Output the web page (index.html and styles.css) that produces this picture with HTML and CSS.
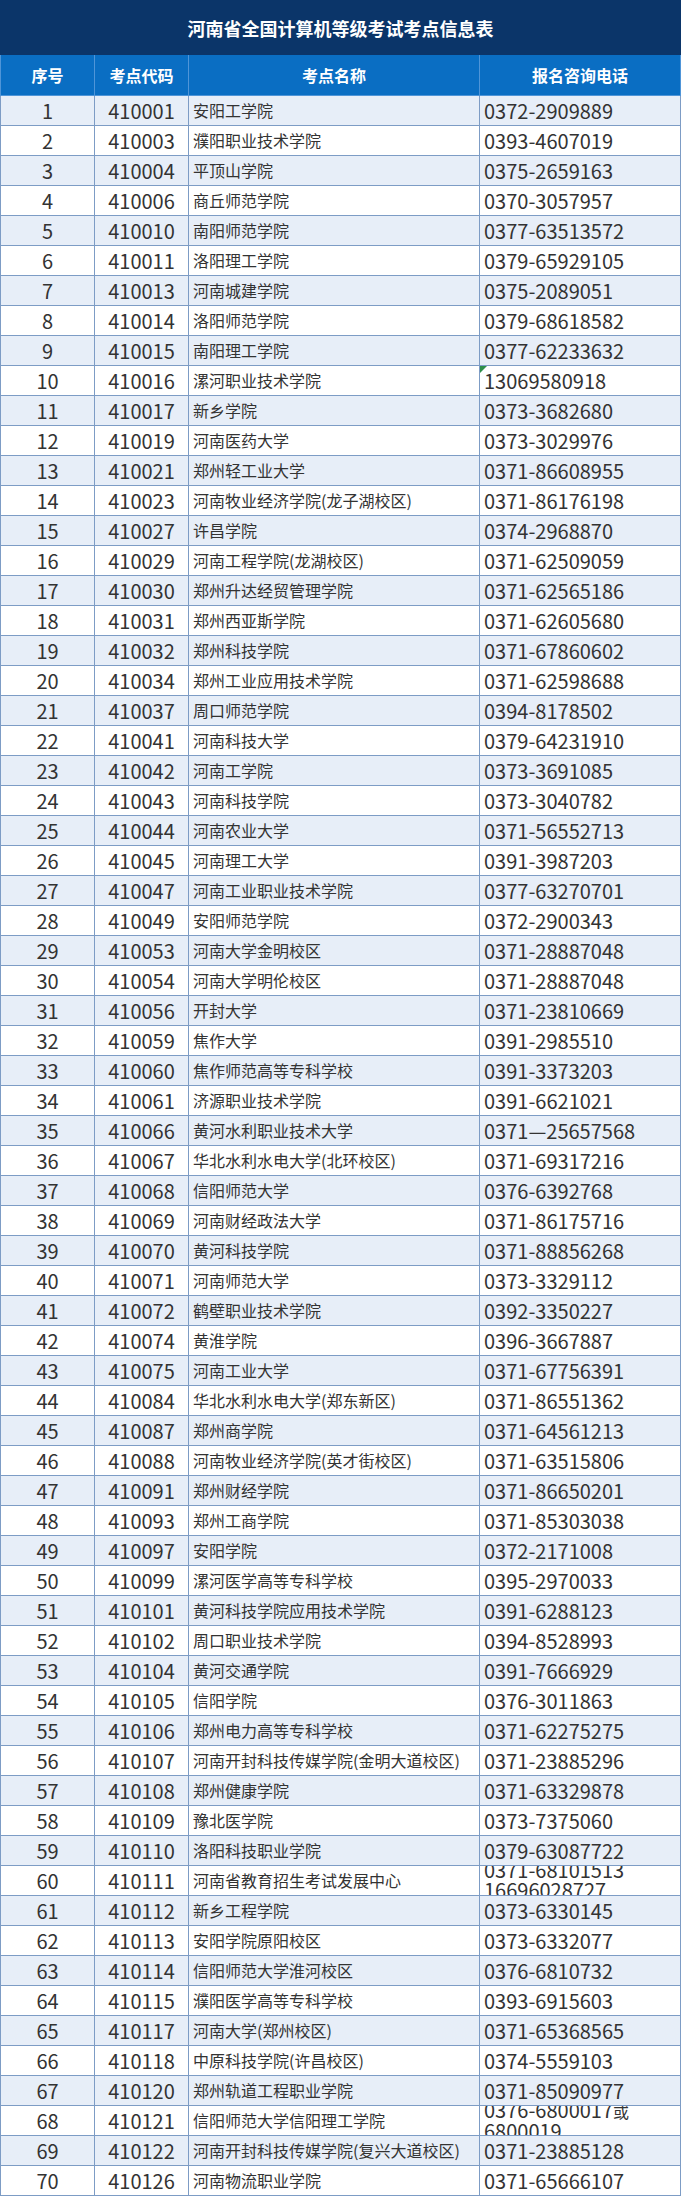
FILE: index.html
```html
<!DOCTYPE html>
<html lang="zh-CN">
<head>
<meta charset="utf-8">
<title>河南省全国计算机等级考试考点信息表</title>
<link rel="stylesheet" href="styles.css">
</head>
<body>
<div class="sheet">
  <div class="title">河南省全国计算机等级考试考点信息表</div>
  <table class="grid">
    <colgroup>
      <col class="c-no"><col class="c-code"><col class="c-name"><col class="c-tel">
    </colgroup>
    <thead>
      <tr><th>序号</th><th>考点代码</th><th>考点名称</th><th>报名咨询电话</th></tr>
    </thead>
    <tbody>
      <tr><td class="n">1</td><td class="n">410001</td><td class="nm">安阳工学院</td><td class="t">0372-2909889</td></tr>
      <tr><td class="n">2</td><td class="n">410003</td><td class="nm">濮阳职业技术学院</td><td class="t">0393-4607019</td></tr>
      <tr><td class="n">3</td><td class="n">410004</td><td class="nm">平顶山学院</td><td class="t">0375-2659163</td></tr>
      <tr><td class="n">4</td><td class="n">410006</td><td class="nm">商丘师范学院</td><td class="t">0370-3057957</td></tr>
      <tr><td class="n">5</td><td class="n">410010</td><td class="nm">南阳师范学院</td><td class="t">0377-63513572</td></tr>
      <tr><td class="n">6</td><td class="n">410011</td><td class="nm">洛阳理工学院</td><td class="t">0379-65929105</td></tr>
      <tr><td class="n">7</td><td class="n">410013</td><td class="nm">河南城建学院</td><td class="t">0375-2089051</td></tr>
      <tr><td class="n">8</td><td class="n">410014</td><td class="nm">洛阳师范学院</td><td class="t">0379-68618582</td></tr>
      <tr><td class="n">9</td><td class="n">410015</td><td class="nm">南阳理工学院</td><td class="t">0377-62233632</td></tr>
      <tr><td class="n">10</td><td class="n">410016</td><td class="nm">漯河职业技术学院</td><td class="t note">13069580918</td></tr>
      <tr><td class="n">11</td><td class="n">410017</td><td class="nm">新乡学院</td><td class="t">0373-3682680</td></tr>
      <tr><td class="n">12</td><td class="n">410019</td><td class="nm">河南医药大学</td><td class="t">0373-3029976</td></tr>
      <tr><td class="n">13</td><td class="n">410021</td><td class="nm">郑州轻工业大学</td><td class="t">0371-86608955</td></tr>
      <tr><td class="n">14</td><td class="n">410023</td><td class="nm">河南牧业经济学院(龙子湖校区)</td><td class="t">0371-86176198</td></tr>
      <tr><td class="n">15</td><td class="n">410027</td><td class="nm">许昌学院</td><td class="t">0374-2968870</td></tr>
      <tr><td class="n">16</td><td class="n">410029</td><td class="nm">河南工程学院(龙湖校区)</td><td class="t">0371-62509059</td></tr>
      <tr><td class="n">17</td><td class="n">410030</td><td class="nm">郑州升达经贸管理学院</td><td class="t">0371-62565186</td></tr>
      <tr><td class="n">18</td><td class="n">410031</td><td class="nm">郑州西亚斯学院</td><td class="t">0371-62605680</td></tr>
      <tr><td class="n">19</td><td class="n">410032</td><td class="nm">郑州科技学院</td><td class="t">0371-67860602</td></tr>
      <tr><td class="n">20</td><td class="n">410034</td><td class="nm">郑州工业应用技术学院</td><td class="t">0371-62598688</td></tr>
      <tr><td class="n">21</td><td class="n">410037</td><td class="nm">周口师范学院</td><td class="t">0394-8178502</td></tr>
      <tr><td class="n">22</td><td class="n">410041</td><td class="nm">河南科技大学</td><td class="t">0379-64231910</td></tr>
      <tr><td class="n">23</td><td class="n">410042</td><td class="nm">河南工学院</td><td class="t">0373-3691085</td></tr>
      <tr><td class="n">24</td><td class="n">410043</td><td class="nm">河南科技学院</td><td class="t">0373-3040782</td></tr>
      <tr><td class="n">25</td><td class="n">410044</td><td class="nm">河南农业大学</td><td class="t">0371-56552713</td></tr>
      <tr><td class="n">26</td><td class="n">410045</td><td class="nm">河南理工大学</td><td class="t">0391-3987203</td></tr>
      <tr><td class="n">27</td><td class="n">410047</td><td class="nm">河南工业职业技术学院</td><td class="t">0377-63270701</td></tr>
      <tr><td class="n">28</td><td class="n">410049</td><td class="nm">安阳师范学院</td><td class="t">0372-2900343</td></tr>
      <tr><td class="n">29</td><td class="n">410053</td><td class="nm">河南大学金明校区</td><td class="t">0371-28887048</td></tr>
      <tr><td class="n">30</td><td class="n">410054</td><td class="nm">河南大学明伦校区</td><td class="t">0371-28887048</td></tr>
      <tr><td class="n">31</td><td class="n">410056</td><td class="nm">开封大学</td><td class="t">0371-23810669</td></tr>
      <tr><td class="n">32</td><td class="n">410059</td><td class="nm">焦作大学</td><td class="t">0391-2985510</td></tr>
      <tr><td class="n">33</td><td class="n">410060</td><td class="nm">焦作师范高等专科学校</td><td class="t">0391-3373203</td></tr>
      <tr><td class="n">34</td><td class="n">410061</td><td class="nm">济源职业技术学院</td><td class="t">0391-6621021</td></tr>
      <tr><td class="n">35</td><td class="n">410066</td><td class="nm">黄河水利职业技术大学</td><td class="t">0371—25657568</td></tr>
      <tr><td class="n">36</td><td class="n">410067</td><td class="nm">华北水利水电大学(北环校区)</td><td class="t">0371-69317216</td></tr>
      <tr><td class="n">37</td><td class="n">410068</td><td class="nm">信阳师范大学</td><td class="t">0376-6392768</td></tr>
      <tr><td class="n">38</td><td class="n">410069</td><td class="nm">河南财经政法大学</td><td class="t">0371-86175716</td></tr>
      <tr><td class="n">39</td><td class="n">410070</td><td class="nm">黄河科技学院</td><td class="t">0371-88856268</td></tr>
      <tr><td class="n">40</td><td class="n">410071</td><td class="nm">河南师范大学</td><td class="t">0373-3329112</td></tr>
      <tr><td class="n">41</td><td class="n">410072</td><td class="nm">鹤壁职业技术学院</td><td class="t">0392-3350227</td></tr>
      <tr><td class="n">42</td><td class="n">410074</td><td class="nm">黄淮学院</td><td class="t">0396-3667887</td></tr>
      <tr><td class="n">43</td><td class="n">410075</td><td class="nm">河南工业大学</td><td class="t">0371-67756391</td></tr>
      <tr><td class="n">44</td><td class="n">410084</td><td class="nm">华北水利水电大学(郑东新区)</td><td class="t">0371-86551362</td></tr>
      <tr><td class="n">45</td><td class="n">410087</td><td class="nm">郑州商学院</td><td class="t">0371-64561213</td></tr>
      <tr><td class="n">46</td><td class="n">410088</td><td class="nm">河南牧业经济学院(英才街校区)</td><td class="t">0371-63515806</td></tr>
      <tr><td class="n">47</td><td class="n">410091</td><td class="nm">郑州财经学院</td><td class="t">0371-86650201</td></tr>
      <tr><td class="n">48</td><td class="n">410093</td><td class="nm">郑州工商学院</td><td class="t">0371-85303038</td></tr>
      <tr><td class="n">49</td><td class="n">410097</td><td class="nm">安阳学院</td><td class="t">0372-2171008</td></tr>
      <tr><td class="n">50</td><td class="n">410099</td><td class="nm">漯河医学高等专科学校</td><td class="t">0395-2970033</td></tr>
      <tr><td class="n">51</td><td class="n">410101</td><td class="nm">黄河科技学院应用技术学院</td><td class="t">0391-6288123</td></tr>
      <tr><td class="n">52</td><td class="n">410102</td><td class="nm">周口职业技术学院</td><td class="t">0394-8528993</td></tr>
      <tr><td class="n">53</td><td class="n">410104</td><td class="nm">黄河交通学院</td><td class="t">0391-7666929</td></tr>
      <tr><td class="n">54</td><td class="n">410105</td><td class="nm">信阳学院</td><td class="t">0376-3011863</td></tr>
      <tr><td class="n">55</td><td class="n">410106</td><td class="nm">郑州电力高等专科学校</td><td class="t">0371-62275275</td></tr>
      <tr><td class="n">56</td><td class="n">410107</td><td class="nm">河南开封科技传媒学院(金明大道校区)</td><td class="t">0371-23885296</td></tr>
      <tr><td class="n">57</td><td class="n">410108</td><td class="nm">郑州健康学院</td><td class="t">0371-63329878</td></tr>
      <tr><td class="n">58</td><td class="n">410109</td><td class="nm">豫北医学院</td><td class="t">0373-7375060</td></tr>
      <tr><td class="n">59</td><td class="n">410110</td><td class="nm">洛阳科技职业学院</td><td class="t">0379-63087722</td></tr>
      <tr><td class="n">60</td><td class="n">410111</td><td class="nm">河南省教育招生考试发展中心</td><td class="t"><div class="clip"><span>0371-68101513</span><span>16696028727</span></div></td></tr>
      <tr><td class="n">61</td><td class="n">410112</td><td class="nm">新乡工程学院</td><td class="t">0373-6330145</td></tr>
      <tr><td class="n">62</td><td class="n">410113</td><td class="nm">安阳学院原阳校区</td><td class="t">0373-6332077</td></tr>
      <tr><td class="n">63</td><td class="n">410114</td><td class="nm">信阳师范大学淮河校区</td><td class="t">0376-6810732</td></tr>
      <tr><td class="n">64</td><td class="n">410115</td><td class="nm">濮阳医学高等专科学校</td><td class="t">0393-6915603</td></tr>
      <tr><td class="n">65</td><td class="n">410117</td><td class="nm">河南大学(郑州校区)</td><td class="t">0371-65368565</td></tr>
      <tr><td class="n">66</td><td class="n">410118</td><td class="nm">中原科技学院(许昌校区)</td><td class="t">0374-5559103</td></tr>
      <tr><td class="n">67</td><td class="n">410120</td><td class="nm">郑州轨道工程职业学院</td><td class="t">0371-85090977</td></tr>
      <tr><td class="n">68</td><td class="n">410121</td><td class="nm">信阳师范大学信阳理工学院</td><td class="t"><div class="clip"><span>0376-6800017<span class="cjk">或</span></span><span>6800019</span></div></td></tr>
      <tr><td class="n">69</td><td class="n">410122</td><td class="nm">河南开封科技传媒学院(复兴大道校区)</td><td class="t">0371-23885128</td></tr>
      <tr><td class="n">70</td><td class="n">410126</td><td class="nm">河南物流职业学院</td><td class="t">0371-65666107</td></tr>
    </tbody>
  </table>
</div>
</body>
</html>
```
FILE: styles.css
```css
* { box-sizing: border-box; }
body {
  margin: 0;
  background: #ffffff;
  font-family: "Noto Sans CJK SC", "Noto Sans", sans-serif;
  color: #333333;
}
.sheet { width: 681px; }
.title {
  height: 55px;
  background: #0b3569;
  color: #ffffff;
  font-size: 18px;
  font-weight: bold;
  display: flex;
  align-items: center;
  justify-content: center;
}
.grid {
  width: 680px;
  border-collapse: collapse;
  table-layout: fixed;
}
.c-no { width: 94px; }
.c-code { width: 94px; }
.c-name { width: 291px; }
.c-tel { width: 201px; }
.grid th {
  height: 40px;
  background: #0a6ec3;
  color: #ffffff;
  font-size: 16px;
  font-weight: bold;
  border: 1px solid #4f95d8;
  border-top: none;
  padding: 0;
}
.grid tbody tr { height: 30px; }
.grid tbody tr:nth-child(odd) td { background: #e7eef8; }
.grid td {
  border: 1px solid #7d9cc5;
  padding: 0 4px;
  white-space: nowrap;
  overflow: hidden;
}
.grid td.n {
  text-align: center;
  font-family: "Liberation Sans Narrow", "Noto Sans CJK SC", sans-serif;
  font-size: 20px;
}
.grid td.nm {
  font-size: 16px;
}
.grid td.t {
  font-family: "Liberation Sans Narrow", "Noto Sans CJK SC", sans-serif;
  font-size: 20px;
  position: relative;
}
.cjk { font-family: "Noto Sans CJK SC", sans-serif; font-size: 16px; }
.clip {
  height: 29px;
  display: flex;
  flex-direction: column;
  justify-content: center;
  overflow: hidden;
  line-height: 20px;
}
.note::before {
  content: "";
  position: absolute;
  left: 0;
  top: 0;
  border-top: 7px solid #2f8f4a;
  border-right: 7px solid transparent;
}
```
